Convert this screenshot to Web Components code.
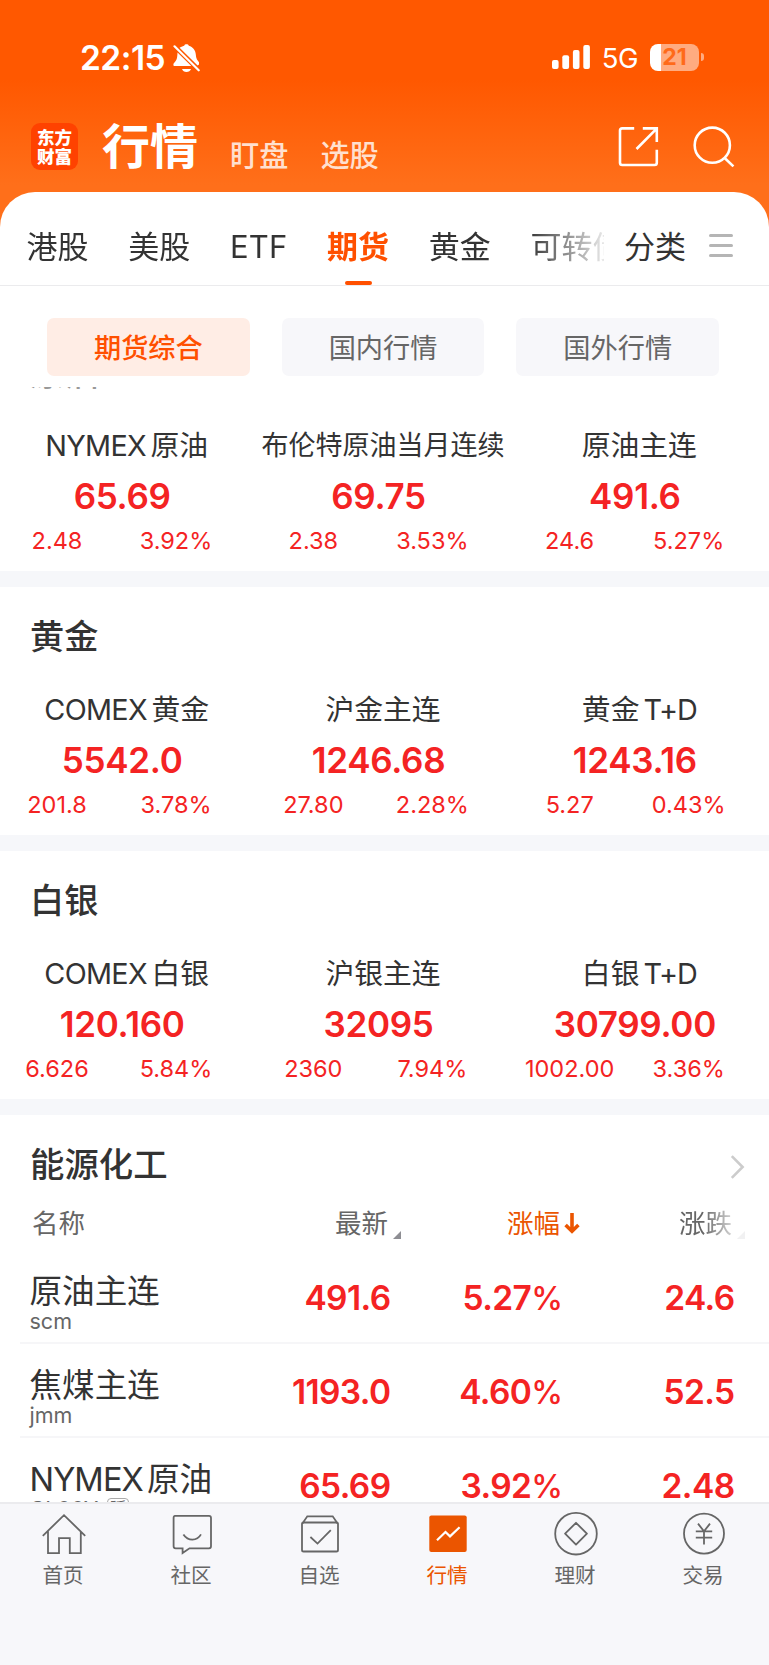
<!DOCTYPE html>
<html lang="zh-CN">
<head>
<meta charset="utf-8">
<title>行情</title>
<style>
  body {
    margin: 0;
    font-family: Inter, "Noto Sans CJK SC", sans-serif;
    color: #333;
    background: #fff;
  }
</style>
</head>
<body>
<market-app></market-app>

<script>
function define(name, html, setup) {
  const template = document.createElement('template');
  template.innerHTML = html;

  customElements.define(name, class extends HTMLElement {
    constructor() {
      super();
      this._shadowRoot = this.attachShadow({ mode: 'open' });
      this._shadowRoot.appendChild(template.content.cloneNode(true));
    }

    connectedCallback() {
      if (setup) {
        setup(this, this._shadowRoot);
      }
    }
  });
}

// latin part of a name stands a little apart from the chinese part
function fillName($node, text) {
  let parts = text.match(/[A-Z+]+|[^A-Z+]+/g);
  parts.forEach((part) => {
    let span = document.createElement('span');
    span.textContent = part;
    if (/[A-Z]/.test(part)) {
      span.className = 'latin';
    }
    $node.appendChild(span);
  });
}

// percent sign is lighter than the digits
function fillNumber($node, text) {
  $node.textContent = text.replace('%', '');
  if (text.endsWith('%')) {
    let sign = document.createElement('span');
    sign.className = 'percent';
    sign.textContent = '%';
    $node.appendChild(sign);
  }
}

define('status-bar', `
  <style>
    :host {
      display: flex;
      align-items: center;
      justify-content: space-between;
      height: 28px;
      padding: 43px 65px 0 80px;
      color: #fff;
    }
    .left, .right {
      display: flex;
      align-items: center;
    }
    .time {
      margin-top: 1px;
      font-size: 33.5px;
      line-height: 28px;
      font-weight: 580;
      letter-spacing: -0.5px;
    }
    .bell { margin: 1px 0 0 8px; }
    .net {
      margin: 2px 12px 0 12px;
      font-size: 27.5px;
      line-height: 28px;
      letter-spacing: -0.5px;
    }
    .battery {
      width: 49px;
      height: 27px;
      border-radius: 8px;
      background: linear-gradient(90deg, #fff 10.5px, #ffab80 10.5px);
      color: #ff6a1a;
      font-size: 23px;
      line-height: 27px;
      font-weight: 700;
      text-align: center;
    }
    .nub {
      width: 3px;
      height: 8px;
      margin-left: 2px;
      border-radius: 0 4px 4px 0;
      background: #ffab80;
    }
    svg { display: block; }
  </style>
  <div class="left">
    <div class="time">22:15</div>
    <svg class="bell" width="28" height="28" viewBox="0 0 28 28">
      <path fill="#fff" d="M6.6 3.8C8.4 2.5 10.4 2 11.2 1.7 11.7-.2 15.3-.2 15.8 1.7 19.9 3 22.6 6 22.8 10.5 22.9 14.5 24.4 16.3 26 18.3L26 20.6 24.6 21.6ZM4.5 8.4 18.3 22H1.6C.2 22 0 20.3 1 19 3.8 15.9 4.3 14.4 4.5 8.4ZM9 25H18C17.4 27 15.6 28 13.5 28S9.6 27 9 25Z"/>
      <path stroke="#fff" stroke-width="2.2" stroke-linecap="round" d="M1.5 2.3 25.7 26.3"/>
    </svg>
  </div>
  <div class="right">
    <svg width="38" height="24" viewBox="0 0 38 24" fill="#fff">
      <rect x="0" y="15" width="6.6" height="9" rx="2"/>
      <rect x="10.3" y="10.3" width="6.8" height="13.7" rx="2"/>
      <rect x="20.9" y="5" width="6.6" height="19" rx="2"/>
      <rect x="31.3" y="0" width="6.6" height="24" rx="2"/>
    </svg>
    <div class="net">5G</div>
    <div class="battery">21</div>
    <div class="nub"></div>
  </div>
`);

define('app-header', `
  <style>
    :host {
      display: flex;
      align-items: flex-start;
      height: 69px;
      padding: 51px 34px 0 31px;
      color: #fff;
    }
    .logo {
      box-sizing: border-box;
      width: 47px;
      height: 47px;
      margin-top: 1px;
      padding-top: 5px;
      border-radius: 9px;
      background: #ff4200;
      font-size: 17.5px;
      line-height: 19px;
      font-weight: 900;
      text-align: center;
    }
    .title {
      margin: 0 0 0 24px;
      font-size: 48px;
      line-height: 50px;
      font-weight: 700;
    }
    .link {
      margin: 17px 0 0 32px;
      font-size: 29.2px;
      line-height: 34px;
      font-weight: 500;
      color: #ffe0cf;
    }
    .link + .link { margin-left: 32px; }
    .icons {
      display: flex;
      gap: 34px;
      margin: 4px 0 0 auto;
    }
    svg { display: block; }
  </style>
  <div class="logo">东方<br>财富</div>
  <div class="title">行情</div>
  <div class="link">盯盘</div>
  <div class="link">选股</div>
  <div class="icons">
    <svg width="41" height="41" viewBox="0 0 41 41" fill="none" stroke="#fff" stroke-width="2.6">
      <path d="M16.2 2.4H4.2Q2 2.4 2 4.6V36.8Q2 39 4.2 39H36.6Q38.8 39 38.8 36.8V23.8"/>
      <path d="M24.8 2.4H38.8V16M38.4 2.8 18.5 23"/>
    </svg>
    <svg width="42" height="42" viewBox="0 0 42 42" fill="none" stroke="#fff" stroke-width="2.6">
      <circle cx="19.3" cy="19.2" r="17.6"/>
      <path d="M31.4 31.8 40.4 40.4"/>
    </svg>
  </div>
`);

define('market-tabs', `
  <style>
    :host {
      display: flex;
      position: relative;
      height: 93px;
      border-bottom: 1px solid #ebebed;
      font-size: 31px;
      line-height: 110px;
      white-space: nowrap;
    }
    .strip {
      display: flex;
      gap: 39.7px;
      width: 577.5px;
      padding-left: 26.5px;
      overflow: hidden;
      -webkit-mask-image: linear-gradient(90deg, #000 528px, rgba(0,0,0,0.1) 605px);
      mask-image: linear-gradient(90deg, #000 528px, rgba(0,0,0,0.1) 605px);
    }
    .active {
      display: flex;
      flex-direction: column;
      align-items: center;
      height: 93px;
      color: #ff5000;
      font-weight: 700;
    }
    .active::after {
      content: '';
      width: 27px;
      height: 4px;
      margin-top: -21px;
      border-radius: 2px;
      background: #ff5000;
    }
    .etf { letter-spacing: 0.2px; }
    .all { margin-left: 20px; }
    .menu {
      display: flex;
      flex-direction: column;
      gap: 7.2px;
      margin: 42px 0 0 23px;
    }
    .menu i {
      width: 24px;
      height: 3px;
      border-radius: 1.5px;
      background: #b5b5b5;
    }
  </style>
  <div class="strip">
    <span>港股</span>
    <span>美股</span>
    <span class="etf">ETF</span>
    <span class="active">期货</span>
    <span>黄金</span>
    <span>可转债</span>
  </div>
  <span class="all">分类</span>
  <div class="menu"><i></i><i></i><i></i></div>
`);

define('sub-tab', `
  <style>
    :host {
      display: block;
      width: 202.7px;
      height: 58px;
      border-radius: 7px;
      background: #f7f7fa;
      color: #666;
      font-size: 27.2px;
      line-height: 61px;
      text-align: center;
    }
    :host([active]) {
      background: #ffede5;
      color: #ff5000;
      font-weight: 500;
    }
  </style>
  <slot></slot>
`);

define('quote-cell', `
  <style>
    :host {
      display: block;
      flex: 1;
      text-align: center;
      white-space: nowrap;
    }
    .name {
      height: 44px;
      margin-right: 3px;
      font-size: 28.8px;
      line-height: 45px;
    }
    :host([long]) .name { font-size: 27px; }
    .latin { letter-spacing: -0.7px; }
    .latin:first-child { margin-right: 4.5px; }
    .latin:last-child { margin-left: 4px; letter-spacing: -1px; }
    .price {
      height: 52px;
      margin-right: 12px;
      color: #f42323;
      font-size: 35px;
      line-height: 58px;
      font-weight: 600;
      letter-spacing: -0.3px;
    }
    .change {
      display: flex;
      color: #f42323;
      font-size: 23.5px;
      line-height: 44px;
    }
    .diff { width: 114px; }
    .rate { width: 123px; }
    .percent { letter-spacing: -1px; }
  </style>
  <div class="name"></div>
  <div class="price"></div>
  <div class="change">
    <div class="diff"></div>
    <div class="rate"></div>
  </div>
`, (host, root) => {
  fillName(root.querySelector('.name'), host.getAttribute('name'));
  ['price', 'diff', 'rate'].forEach((key) => {
    fillNumber(root.querySelector(`.${key}`), host.getAttribute(key));
  });
});

define('quote-section', `
  <style>
    :host {
      display: block;
      box-sizing: border-box;
      height: 264px;
      border-bottom: 16px solid #f6f7fa;
    }
    .title {
      height: 100px;
      padding-left: 30px;
      font-size: 34.2px;
      line-height: var(--title-line, 100px);
      font-weight: 500;
      color: var(--title-color, inherit);
    }
    .cells { display: flex; }
  </style>
  <div class="title"></div>
  <div class="cells"><slot></slot></div>
`, (host, root) => {
  root.querySelector('.title').textContent = host.getAttribute('name');
});

define('rank-head', `
  <style>
    :host { display: block; }
    .title {
      display: flex;
      align-items: flex-start;
      justify-content: space-between;
      height: 99px;
      padding: 0 24px 0 30px;
      font-size: 34.4px;
      line-height: 100px;
      font-weight: 500;
    }
    .title svg { margin-top: 40px; }
    .cols {
      display: grid;
      grid-template-columns: 303px 172px 172px 1fr;
      height: 36px;
      padding-left: 32px;
      color: #666;
      font-size: 26.5px;
      line-height: 19px;
    }
    .cols div { display: flex; }
    .tri { margin: 17px 0 0 5px; }
    .sorted { color: #eb5500; }
    .sorted svg { margin: -2px 0 0 4px; }
    .fade {
      height: 50px;
      margin-top: -14px;
      padding-top: 14px;
      box-sizing: border-box;
      -webkit-mask-image: linear-gradient(90deg, #000 24px, rgba(0,0,0,0.12) 60px);
      mask-image: linear-gradient(90deg, #000 24px, rgba(0,0,0,0.12) 60px);
    }
  </style>
  <div class="title">
    <span>能源化工</span>
    <svg width="15" height="24" viewBox="0 0 15 24" fill="none" stroke="#ccc" stroke-width="2.6">
      <path d="M1.8 1.2 12.6 12 1.8 22.8"/>
    </svg>
  </div>
  <div class="cols">
    <div>名称</div>
    <div>最新<svg class="tri" width="8" height="8"><path fill="#8e8e93" d="M8 0V8H0Z"/></svg></div>
    <div class="sorted">涨幅
      <svg width="16" height="22" viewBox="0 0 16 22" fill="none" stroke="#eb5500" stroke-width="3.6">
        <path d="M8 1V19M1.6 13 8 19.2 14.4 13"/>
      </svg>
    </div>
    <div class="fade">涨跌<svg class="tri" width="8" height="8"><path fill="#8e8e93" d="M8 0V8H0Z"/></svg></div>
  </div>
`);

define('rank-row', `
  <style>
    :host {
      display: grid;
      box-sizing: border-box;
      grid-template-columns: 200px 161px 172px 172px;
      height: 94px;
      margin-left: 20px;
      padding: 0 0 0 9.5px;
      border-bottom: 2px solid #f6f6f8;
      white-space: nowrap;
    }
    .name {
      height: 53px;
      font-size: 32.6px;
      line-height: 82px;
    }
    .latin { letter-spacing: -0.9px; margin-right: 4px; }
    .code {
      display: flex;
      gap: 9px;
      font-size: 21.5px;
      line-height: 37px;
      color: #666;
    }
    .flag {
      width: 20px;
      height: 18px;
      margin-top: 7px;
      border: 1.5px solid #aaa;
      border-radius: 4px;
      font-size: 16px;
      line-height: 18px;
      text-align: center;
    }
    .num {
      color: #f42323;
      font-size: 33.5px;
      line-height: 96px;
      font-weight: 600;
      text-align: right;
      letter-spacing: -0.6px;
    }
    .percent {
      font-size: 32px;
      font-weight: 500;
      letter-spacing: -0.6px;
    }
  </style>
  <div>
    <div class="name"></div>
    <div class="code"><span></span></div>
  </div>
  <div class="num"></div>
  <div class="num"></div>
  <div class="num"></div>
`, (host, root) => {
  fillName(root.querySelector('.name'), host.getAttribute('name'));
  root.querySelector('.code span').textContent = host.getAttribute('code');
  let values = host.getAttribute('values').split(' ');
  root.querySelectorAll('.num').forEach((num, i) => {
    fillNumber(num, values[i]);
  });
  if (host.hasAttribute('flag')) {
    let flag = document.createElement('span');
    flag.className = 'flag';
    flag.textContent = host.getAttribute('flag');
    root.querySelector('.code').appendChild(flag);
  }
});

define('tab-item', `
  <style>
    :host {
      display: flex;
      flex: 1;
      flex-direction: column;
      align-items: center;
      color: #666;
      font-size: 20.6px;
      line-height: 28px;
    }
    :host([active]) { color: #eb5500; }
    .label { margin-right: 2px; }
    ::slotted(svg) {
      display: block;
      width: 46px;
      height: 46px;
      margin: 7px 0 5px;
      fill: none;
      stroke: currentColor;
      stroke-width: 1.8;
    }
  </style>
  <slot name="icon"></slot>
  <span class="label"><slot></slot></span>
`);

define('tab-bar', `
  <style>
    :host {
      display: flex;
      box-sizing: border-box;
      height: 163px;
      padding-right: 1px;
      border-top: 2px solid #ebebee;
      background: #f7f7fa;
    }
  </style>
  <tab-item>首页
    <svg slot="icon" viewBox="0 0 46 46">
      <path d="M1.8 24.8 23 4.2 44.2 24.8M7 20.5V42.2H18V27.2H28.8V42.2H39.8V20.5"/>
    </svg>
  </tab-item>
  <tab-item>社区
    <svg slot="icon" viewBox="0 0 46 46">
      <path d="M6 4.9H40Q42 4.9 42 6.9V35.3Q42 37.3 40 37.3H20.5L13.6 42V37.3H6.6Q4.6 37.3 4.6 35.3V6.9Q4.6 4.9 6 4.9Z"/>
      <path d="M14.4 23.4C19 30.3 28 30.3 32 23.4"/>
    </svg>
  </tab-item>
  <tab-item>自选
    <svg slot="icon" viewBox="0 0 46 46">
      <rect x="5" y="11.5" width="36" height="29" rx="1.6"/>
      <path d="M5.4 12.4 10.3 5.3H35.7L40.6 12.4M13.4 26 20.5 32.6 33.8 19.2"/>
    </svg>
  </tab-item>
  <tab-item active>行情
    <svg slot="icon" viewBox="0 0 46 46">
      <rect x="4.3" y="4.5" width="37.4" height="36.4" rx="2" fill="#eb5500" stroke="none"/>
      <path stroke="#fff" stroke-width="2.2" d="M12 29.3 20.5 21 25 25.4 34.6 16.2"/>
    </svg>
  </tab-item>
  <tab-item>理财
    <svg slot="icon" viewBox="0 0 46 46">
      <circle cx="23" cy="22.7" r="20.8"/>
      <path d="M23 11.8 33.9 22.7 23 33.6 12.1 22.7Z" stroke-linejoin="round"/>
    </svg>
  </tab-item>
  <tab-item>交易
    <svg slot="icon" viewBox="0 0 46 46">
      <circle cx="23" cy="22.6" r="20"/>
      <path d="M17 12.6 23 20.3 29 12.6M14.8 20.3H31.2M14.8 26.6H31.2M23 20.3V33.6"/>
    </svg>
  </tab-item>
`);

define('market-app', `
  <style>
    :host {
      display: flex;
      flex-direction: column;
      height: 1665px;
      overflow: hidden;
    }
    .top {
      height: 192px;
      padding-bottom: 40px;
      background: linear-gradient(180deg, #ff5800 80px, #ff6f1a 185px);
    }
    .sheet {
      display: flex;
      flex: 1;
      flex-direction: column;
      min-height: 0;
      margin-top: -40px;
      border-radius: 35px 35px 0 0;
      background: #fff;
    }
    .filters {
      display: flex;
      gap: 32px;
      height: 69px;
      padding: 32px 47px 0;
    }
    .scroller {
      flex: 1;
      min-height: 0;
      overflow: hidden;
    }
    /* list is already scrolled a bit */
    quote-section:first-child {
      --title-line: 101px;
      --title-color: #999;
      margin-top: -64px;
    }
  </style>
  <div class="top">
    <status-bar></status-bar>
    <app-header></app-header>
  </div>
  <div class="sheet">
    <market-tabs></market-tabs>
    <div class="filters">
      <sub-tab active>期货综合</sub-tab>
      <sub-tab>国内行情</sub-tab>
      <sub-tab>国外行情</sub-tab>
    </div>
    <div class="scroller">
      <quote-section name="原油">
        <quote-cell name="NYMEX原油" price="65.69" diff="2.48" rate="3.92%"></quote-cell>
        <quote-cell long name="布伦特原油当月连续" price="69.75" diff="2.38" rate="3.53%"></quote-cell>
        <quote-cell name="原油主连" price="491.6" diff="24.6" rate="5.27%"></quote-cell>
      </quote-section>
      <quote-section name="黄金">
        <quote-cell name="COMEX黄金" price="5542.0" diff="201.8" rate="3.78%"></quote-cell>
        <quote-cell name="沪金主连" price="1246.68" diff="27.80" rate="2.28%"></quote-cell>
        <quote-cell name="黄金T+D" price="1243.16" diff="5.27" rate="0.43%"></quote-cell>
      </quote-section>
      <quote-section name="白银">
        <quote-cell name="COMEX白银" price="120.160" diff="6.626" rate="5.84%"></quote-cell>
        <quote-cell name="沪银主连" price="32095" diff="2360" rate="7.94%"></quote-cell>
        <quote-cell name="白银T+D" price="30799.00" diff="1002.00" rate="3.36%"></quote-cell>
      </quote-section>
      <rank-head></rank-head>
      <rank-row name="原油主连" code="scm" values="491.6 5.27% 24.6"></rank-row>
      <rank-row name="焦煤主连" code="jmm" values="1193.0 4.60% 52.5"></rank-row>
      <rank-row name="NYMEX原油" code="CL00Y" flag="延" values="65.69 3.92% 2.48"></rank-row>
    </div>
    <tab-bar></tab-bar>
  </div>
`);
</script>
</body>
</html>
